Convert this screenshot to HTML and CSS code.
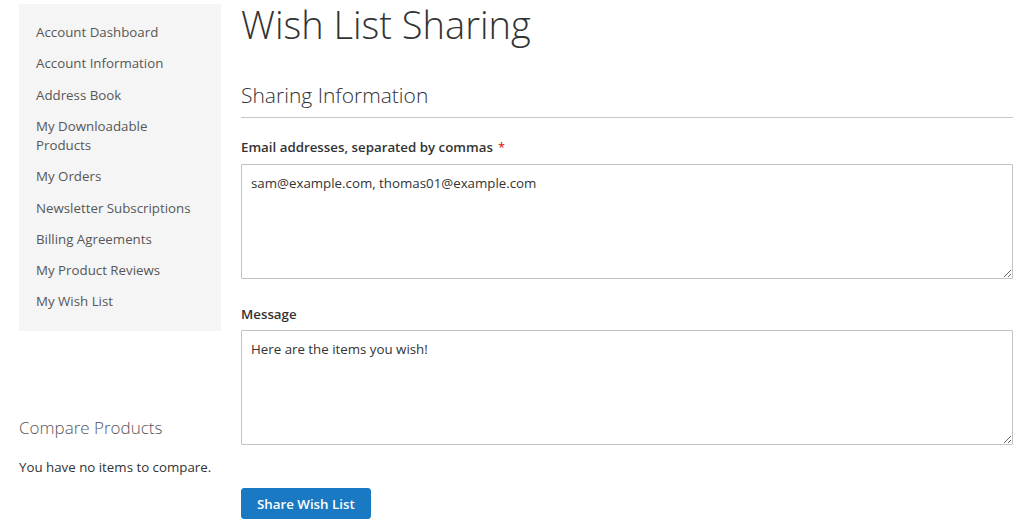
FILE: index.html
```html
<!DOCTYPE html>
<html lang="en">
<head>
    <meta charset="UTF-8">
    <meta name="viewport" content="width=device-width, initial-scale=1.0">
    <title>Wish List Sharing</title>
    <link rel="stylesheet" href="styles.css">
</head>
<body>
<div class="page">
    <aside class="sidebar">
        <ul class="account-nav">
            <li><a href="#">Account Dashboard</a></li>
            <li><a href="#">Account Information</a></li>
            <li><a href="#">Address Book</a></li>
            <li><a href="#">My Downloadable Products</a></li>
            <li><a href="#">My Orders</a></li>
            <li><a href="#">Newsletter Subscriptions</a></li>
            <li><a href="#">Billing Agreements</a></li>
            <li><a href="#">My Product Reviews</a></li>
            <li><a href="#">My Wish List</a></li>
        </ul>

        <div class="block-compare">
            <h2>Compare Products</h2>
            <p>You have no items to compare.</p>
        </div>
    </aside>

    <main class="main">
        <h1 class="page-title">Wish List Sharing</h1>

        <form class="share-form">
            <fieldset>
                <legend>Sharing Information</legend>

                <div class="field">
                    <label for="emails">Email addresses, separated by commas <span class="required">*</span></label>
                    <textarea id="emails" spellcheck="false">sam@example.com, thomas01@example.com</textarea>
                </div>

                <div class="field">
                    <label for="message">Message</label>
                    <textarea id="message" spellcheck="false">Here are the items you wish!</textarea>
                </div>
            </fieldset>

            <button type="submit" class="share-btn">Share Wish List</button>
        </form>
    </main>
</div>
</body>
</html>
```

FILE: styles.css
```css
* {
    margin: 0;
    padding: 0;
    box-sizing: border-box;
}

body {
    font-family: 'Open Sans', 'Liberation Sans', sans-serif;
    font-size: 13.3px;
    line-height: 20px;
    color: #333;
    background: #fff;
}

.page {
    display: flex;
    align-items: flex-start;
    padding: 0 11px 0 19px;
}

/* 侧边栏 */
.sidebar {
    width: 202px;
    flex-shrink: 0;
    margin-top: 4px;
}

.account-nav {
    list-style: none;
    background: #f5f5f5;
    padding: 13px 0;
}

.account-nav a {
    display: block;
    padding: 6.15px 18px 6.15px 17px;
    line-height: 19px;
    color: #575757;
    text-decoration: none;
}

.account-nav a:hover {
    background: #e8e8e8;
}

.block-compare {
    margin-top: 86px;
}

.block-compare h2 {
    font-size: 17px;
    font-weight: 300;
    line-height: 22px;
    color: #575757;
}

.block-compare p {
    margin-top: 18px;
    color: #333;
}

/* 主内容 */
.main {
    flex: 1;
    margin-left: 20px;
}

.page-title {
    font-size: 38px;
    font-weight: 300;
    line-height: 48px;
    color: #333;
}

fieldset {
    border: none;
    margin-top: 34px;
}

legend {
    display: block;
    width: 100%;
    font-size: 21px;
    font-weight: 300;
    line-height: 26px;
    color: #333;
    padding-bottom: 9px;
    border-bottom: 1px solid #c6c6c6;
}

.field {
    margin-top: 19px;
}

.field + .field {
    margin-top: 25px;
}

.field label {
    display: block;
    font-weight: 600;
    margin-bottom: 6px;
}

.required {
    color: #e02b27;
    font-size: 12px;
    margin-left: 2px;
}

.field textarea {
    display: block;
    width: 100%;
    height: 115px;
    padding: 8px 9px;
    border: 1px solid #c2c2c2;
    border-radius: 1px;
    font-family: inherit;
    font-size: 13.3px;
    line-height: 20px;
    color: #333;
    resize: vertical;
    outline: none;
}

.field textarea:focus {
    box-shadow: 0 0 3px 1px #68a8e0;
}

.share-btn {
    margin-top: 43px;
    padding: 0 15px;
    height: 31px;
    background: #1979c3;
    border: 1px solid #1979c3;
    border-radius: 3px;
    color: #fff;
    font-family: inherit;
    font-size: 13.3px;
    font-weight: 600;
    cursor: pointer;
}

.share-btn:hover {
    background: #006bb4;
}
```
